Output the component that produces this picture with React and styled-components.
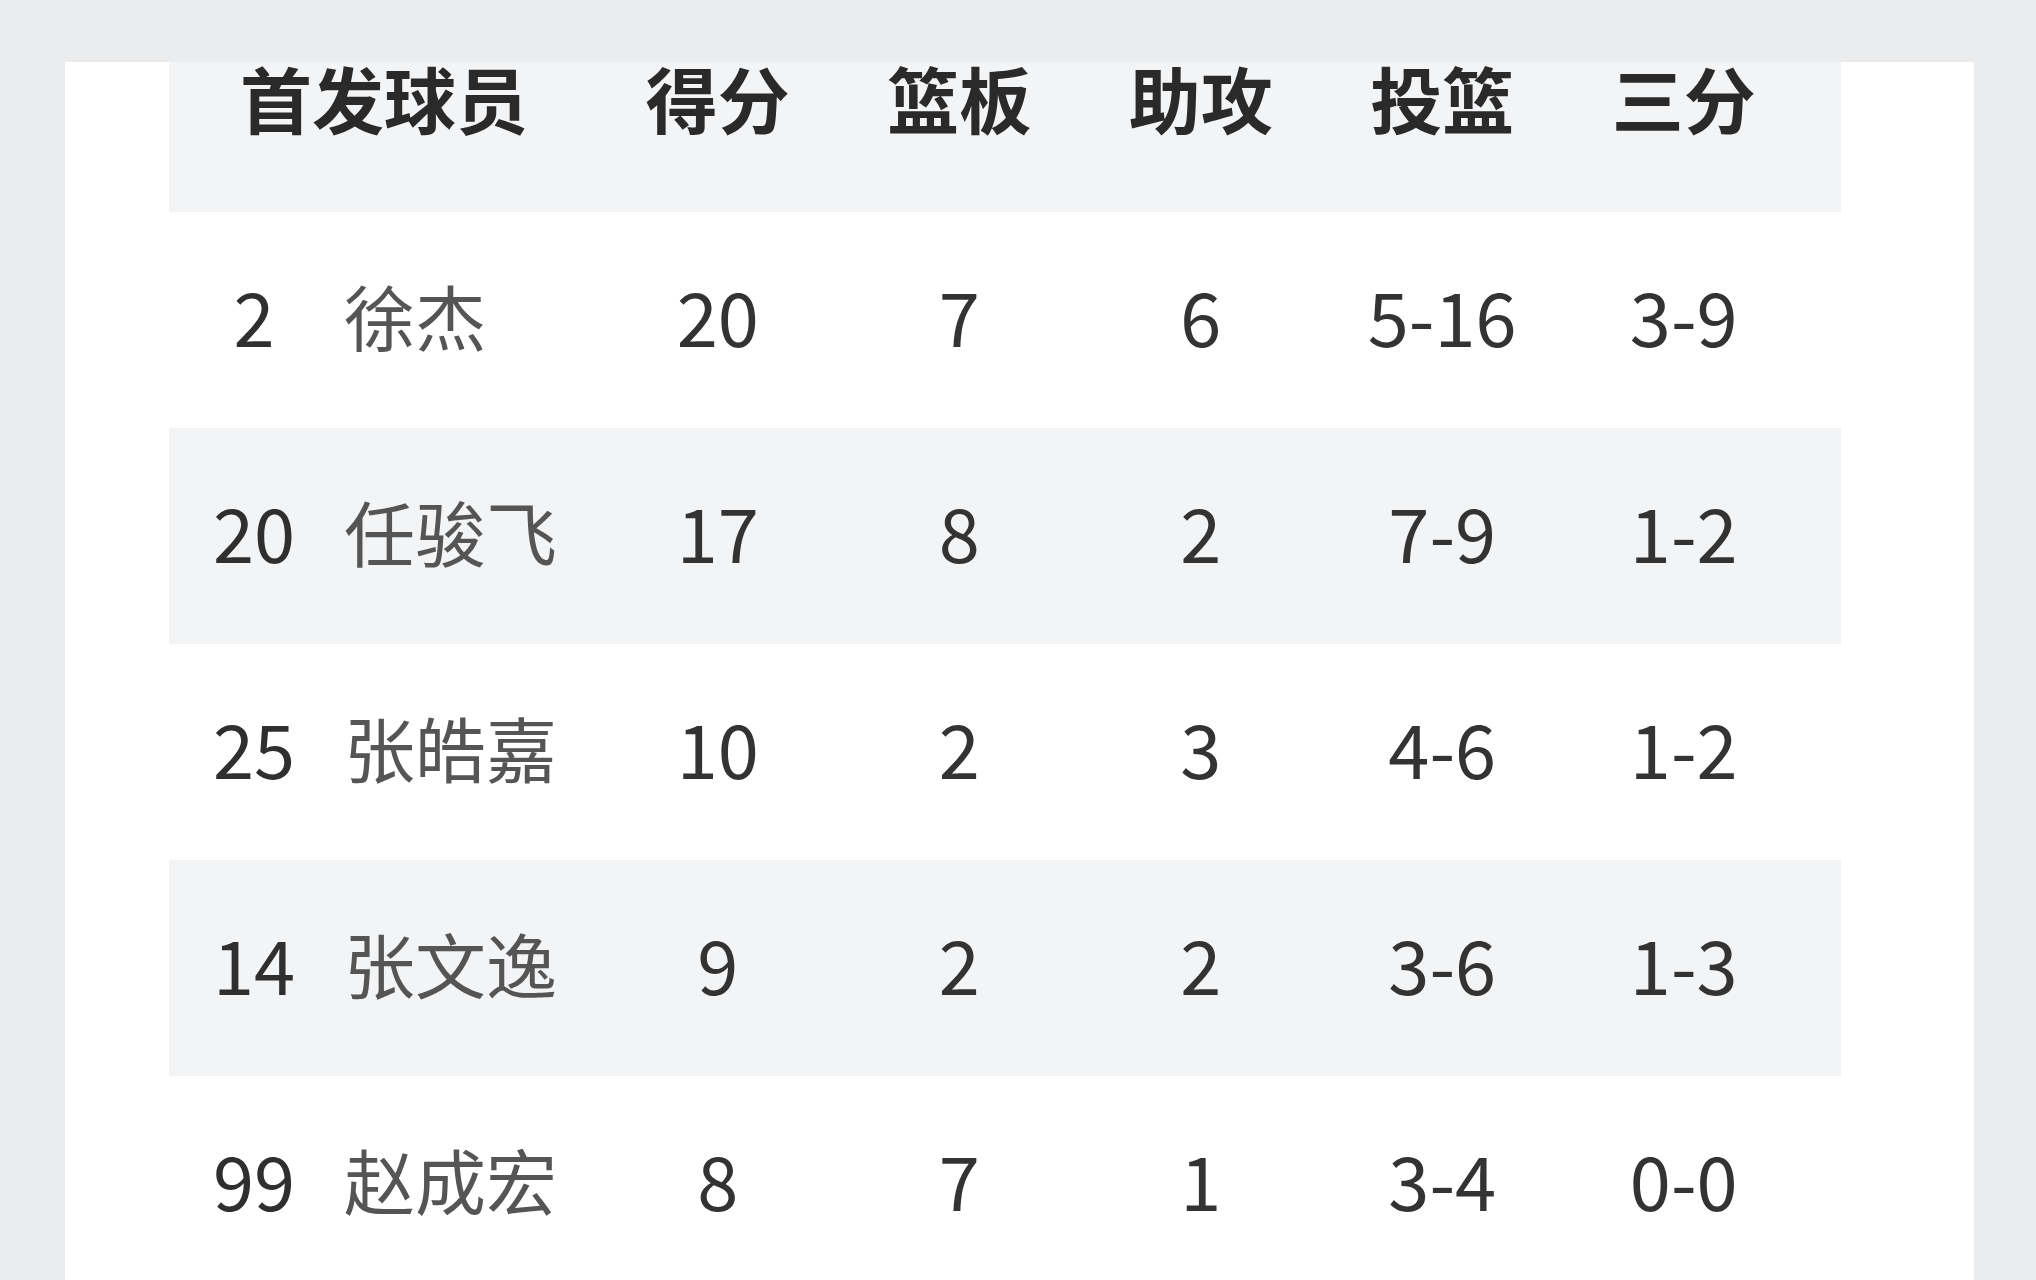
import React from 'react';
import styled, { createGlobalStyle } from 'styled-components';

const GlobalStyle = createGlobalStyle`
  html, body {
    margin: 0;
    padding: 0;
    background: #ebecee;
  }
  body {
    font-family: "Noto Sans CJK SC", "Noto Sans", sans-serif;
  }
`;

const players = [
  { no: '2', name: '徐杰', pts: '20', reb: '7', ast: '6', fg: '5-16', tp: '3-9' },
  { no: '20', name: '任骏飞', pts: '17', reb: '8', ast: '2', fg: '7-9', tp: '1-2' },
  { no: '25', name: '张皓嘉', pts: '10', reb: '2', ast: '3', fg: '4-6', tp: '1-2' },
  { no: '14', name: '张文逸', pts: '9', reb: '2', ast: '2', fg: '3-6', tp: '1-3' },
  { no: '99', name: '赵成宏', pts: '8', reb: '7', ast: '1', fg: '3-4', tp: '0-0' }
];

const App = () => (
  <Page>
    <GlobalStyle />
    <Card>
      <HeaderRow>
        <HeadCell first>首发球员</HeadCell>
        <HeadCell>得分</HeadCell>
        <HeadCell>篮板</HeadCell>
        <HeadCell>助攻</HeadCell>
        <HeadCell>投篮</HeadCell>
        <HeadCell>三分</HeadCell>
      </HeaderRow>
      {players.map((p, i) => (
        <Row key={p.no} striped={i % 2 === 1}>
          <PlayerCell>
            <Number>{p.no}</Number>
            <Name>{p.name}</Name>
          </PlayerCell>
          <Stat>{p.pts}</Stat>
          <Stat>{p.reb}</Stat>
          <Stat>{p.ast}</Stat>
          <Stat>{p.fg}</Stat>
          <Stat>{p.tp}</Stat>
        </Row>
      ))}
    </Card>
  </Page>
);

const Page = styled.div`
  height: 1280px;
  overflow: hidden;
  padding: 62px 62px 0 65px;
  box-sizing: border-box;
  background: #ebecee;
`;

const Card = styled.div`
  height: 100%;
  background: #ffffff;
  padding: 0 133px 0 104px;
  box-sizing: border-box;
`;

const grid = `
  display: grid;
  grid-template-columns: 428px repeat(5, 241.5px) 1fr;
`;

const HeaderRow = styled.div`
  ${grid}
  height: 150px;
  background: #f3f4f6;
`;

const HeadCell = styled.div`
  font-size: 72px;
  font-weight: 700;
  line-height: 70px;
  color: #2a2a2a;
  text-align: ${props => (props.first ? 'left' : 'center')};
  padding-left: ${props => (props.first ? '71px' : '0')};
  white-space: nowrap;
`;

const Row = styled.div`
  ${grid}
  height: 216px;
  box-sizing: border-box;
  padding-bottom: 12px;
  align-items: center;
  background: ${props => (props.striped ? '#f3f4f6' : '#ffffff')};
`;

const PlayerCell = styled.div`
  display: flex;
  align-items: center;
  padding-left: 30px;
  gap: 35px;
`;

const Number = styled.span`
  width: 110px;
  text-align: center;
  font-size: 74px;
  color: #2f2f2f;
`;

const Name = styled.span`
  font-size: 71px;
  color: #555555;
  white-space: nowrap;
`;

const Stat = styled.div`
  text-align: center;
  font-size: 74px;
  color: #333333;
  white-space: nowrap;
`;

export default App;
